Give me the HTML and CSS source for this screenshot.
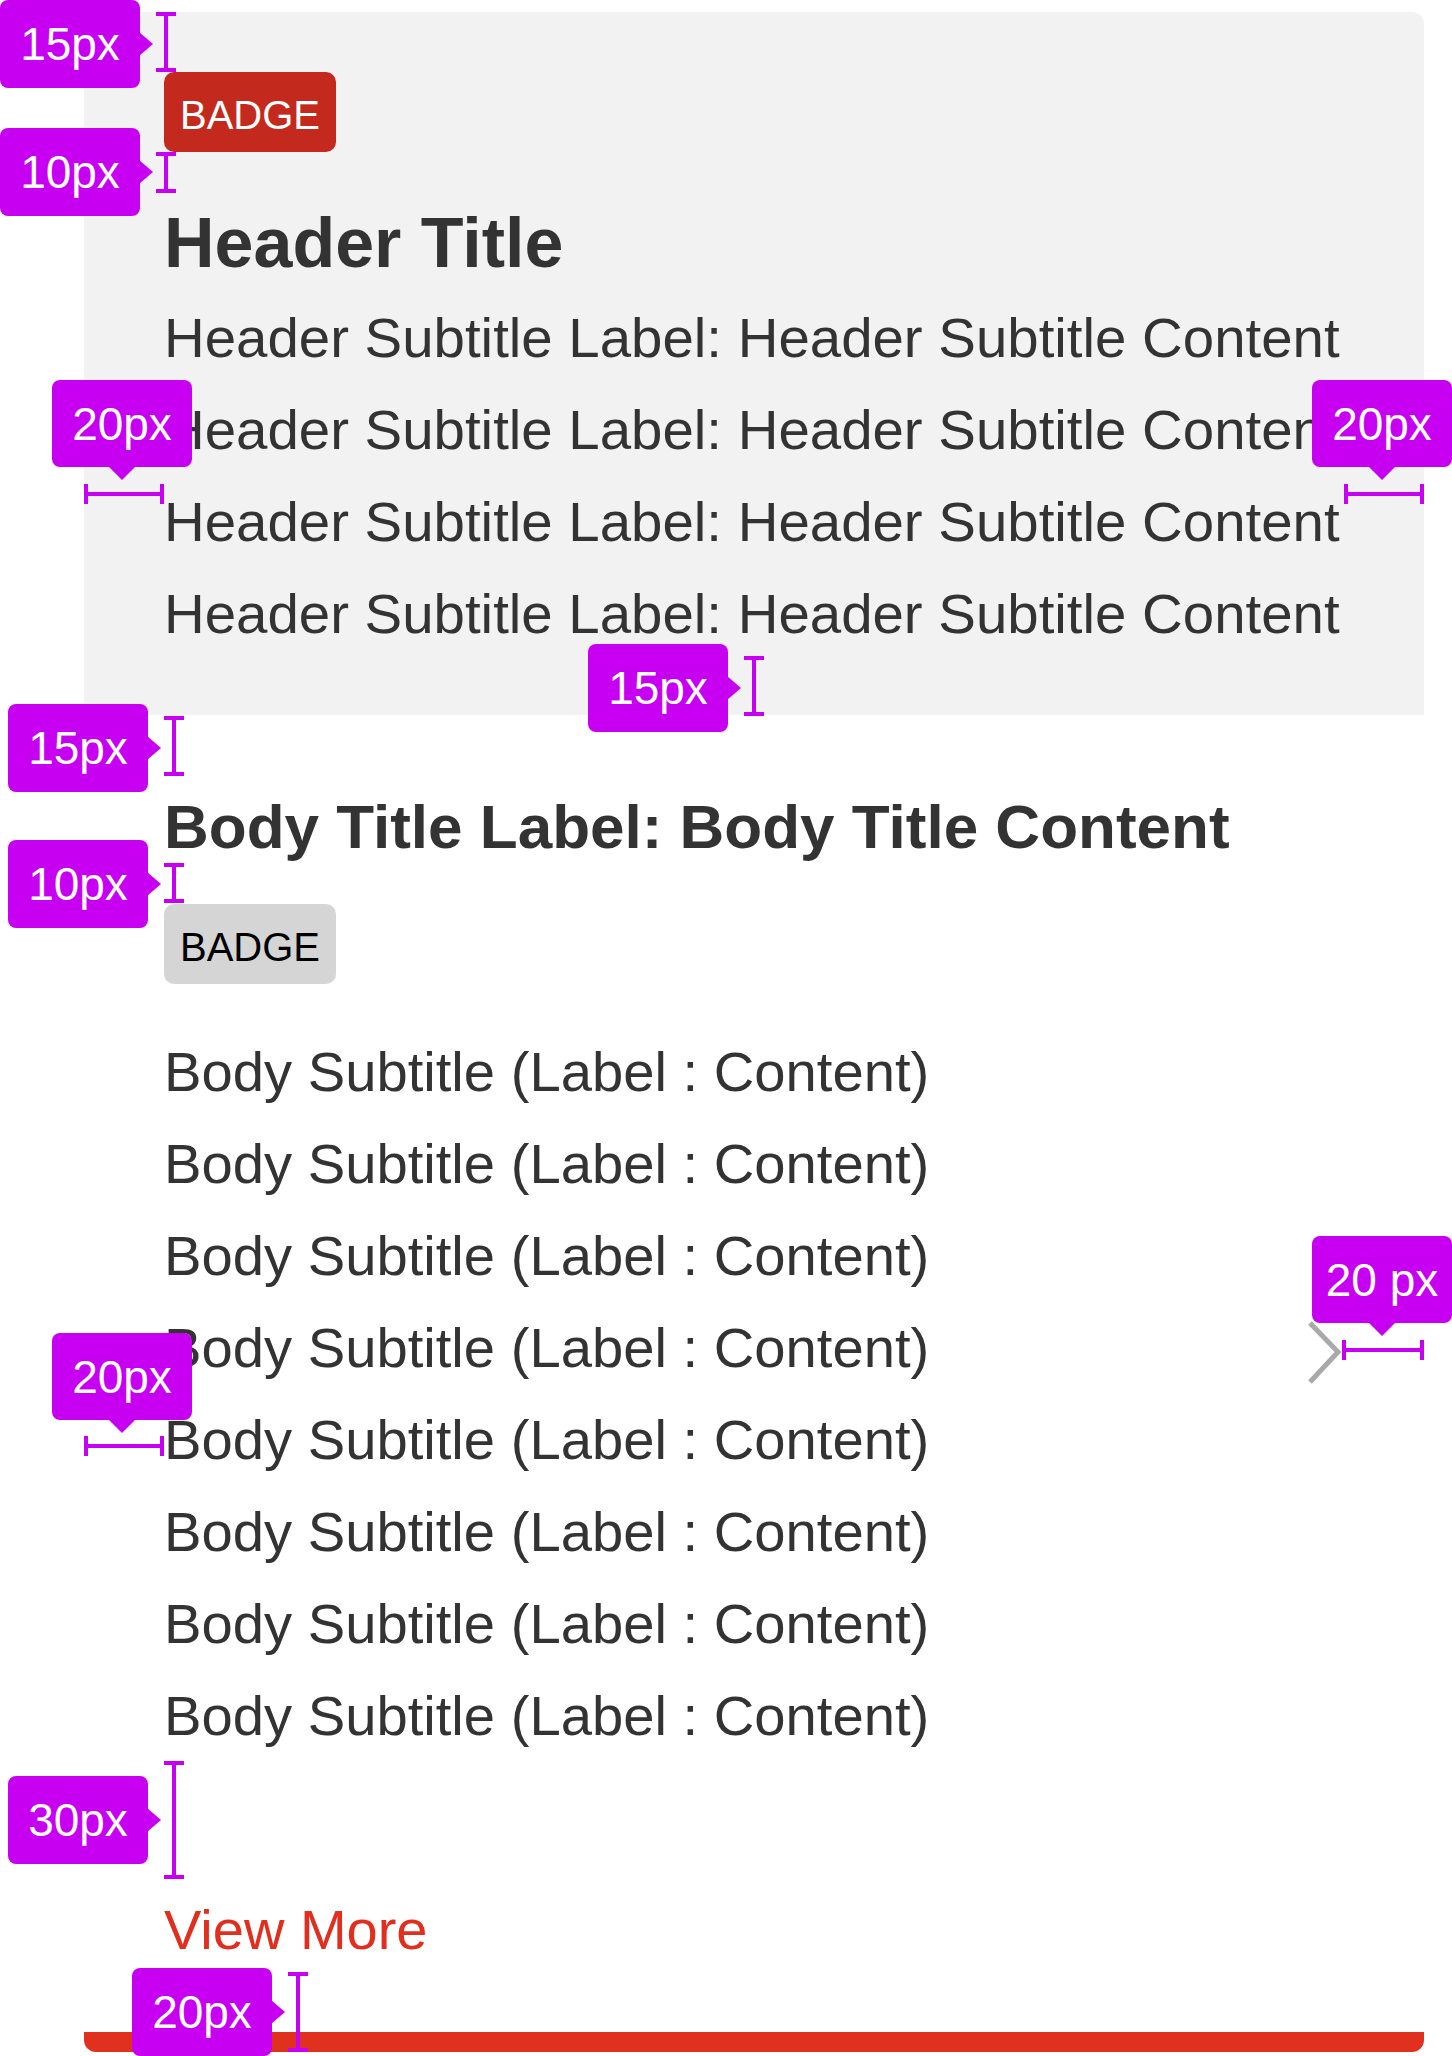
FILE: index.html
```html
<!DOCTYPE html>
<html lang="en">
<head>
<meta charset="utf-8">
<title>Card spec</title>
<link rel="stylesheet" href="styles.css">
</head>
<body>
<div class="page">
  <div class="card">
    <div class="header">
      <span class="badge badge-red">BADGE</span>
      <h1 class="header-title">Header Title</h1>
      <div class="header-sub">Header Subtitle Label: Header Subtitle Content</div>
      <div class="header-sub">Header Subtitle Label: Header Subtitle Content</div>
      <div class="header-sub">Header Subtitle Label: Header Subtitle Content</div>
      <div class="header-sub">Header Subtitle Label: Header Subtitle Content</div>
    </div>
    <div class="body">
      <div class="body-main">
        <h2 class="body-title">Body Title Label: Body Title Content</h2>
        <span class="badge badge-gray">BADGE</span>
        <ul class="body-list">
          <li>Body Subtitle (Label : Content)</li>
          <li>Body Subtitle (Label : Content)</li>
          <li>Body Subtitle (Label : Content)</li>
          <li>Body Subtitle (Label : Content)</li>
          <li>Body Subtitle (Label : Content)</li>
          <li>Body Subtitle (Label : Content)</li>
          <li>Body Subtitle (Label : Content)</li>
          <li>Body Subtitle (Label : Content)</li>
        </ul>
        <a class="view-more">View More</a>
      </div>
      <div class="chev">
        <svg width="36" height="66" viewBox="0 0 36 66"><polyline points="2,3 30,32 2,62" fill="none" stroke="#a9a9a9" stroke-width="5"/></svg>
      </div>
    </div>
    <div class="bar"></div>
  </div>

  <div class="tag tag-r t1">15px</div>
  <div class="vm m1"></div>
  <div class="tag tag-r t2">10px</div>
  <div class="vm m2"></div>
  <div class="tag tag-d t3">20px</div>
  <div class="hm m3"></div>
  <div class="tag tag-d t4">20px</div>
  <div class="hm m4"></div>
  <div class="tag tag-r t5">15px</div>
  <div class="vm m5"></div>
  <div class="tag tag-r t6">15px</div>
  <div class="vm m6"></div>
  <div class="tag tag-r t7">10px</div>
  <div class="vm m7"></div>
  <div class="tag tag-d t8">20 px</div>
  <div class="hm m8"></div>
  <div class="tag tag-d t9">20px</div>
  <div class="hm m9"></div>
  <div class="tag tag-r t10">30px</div>
  <div class="vm m10"></div>
  <div class="tag tag-r t11">20px</div>
  <div class="vm m11"></div>
</div>
</body>
</html>
```

FILE: styles.css
```css
html, body {
  margin: 0;
  padding: 0;
  background: #ffffff;
}
body {
  font-family: "Liberation Sans", Arial, Helvetica, sans-serif;
  color: #333333;
}
.page {
  position: relative;
  width: 1452px;
  height: 2056px;
  overflow: hidden;
}
.card {
  margin: 12px 28px 0 84px;
  display: flex;
  flex-direction: column;
}
.header {
  background: #f2f2f2;
  border-radius: 12px 12px 0 0;
  padding: 60px 80px 55px 80px;
  display: flex;
  flex-direction: column;
}
.badge {
  align-self: flex-start;
  height: 80px;
  padding: 0 16px;
  font-size: 40px;
  line-height: 86px;
  border-radius: 10px;
  box-sizing: border-box;
  overflow: hidden;
}
.badge-red {
  background: #c4291d;
  color: #ffffff;
}
.badge-gray {
  background: #d5d5d5;
  color: #000000;
  margin-top: 31px;
}
.header-title {
  margin: 42px 0 0;
  font-size: 70px;
  font-weight: bold;
  line-height: 98px;
  color: #333333;
}
.header-sub {
  font-size: 56.4px;
  line-height: 92px;
  white-space: nowrap;
}
.body {
  display: flex;
  padding: 0 80px 56px 80px;
}
.body-main {
  flex: 1;
  display: flex;
  flex-direction: column;
}
.body-title {
  margin: 66px 0 0;
  font-size: 62px;
  font-weight: bold;
  line-height: 92px;
  color: #333333;
}
.body-list {
  list-style: none;
  margin: 42px 0 0;
  padding: 0;
}
.body-list li {
  font-size: 56.2px;
  line-height: 92px;
  white-space: nowrap;
}
.view-more {
  margin-top: 122px;
  font-size: 56px;
  line-height: 92px;
  color: #e02f1f;
  align-self: flex-start;
}
.chev {
  align-self: flex-start;
  margin-top: 605px;
  width: 36px;
  height: 66px;
}
.chev svg {
  display: block;
}
.bar {
  height: 20px;
  background: #e0301e;
  border-radius: 0 0 12px 12px;
}

/* spec annotations */
.tag {
  position: absolute;
  width: 140px;
  height: 88px;
  background: #c800f2;
  color: #ffffff;
  border-radius: 8px;
  font-size: 46px;
  line-height: 88px;
  text-align: center;
  white-space: nowrap;
}
.tag-r::after {
  content: "";
  position: absolute;
  left: 139px;
  top: 32px;
  border-top: 12px solid transparent;
  border-bottom: 12px solid transparent;
  border-left: 14px solid #c800f2;
}
.tag-d::after {
  content: "";
  position: absolute;
  left: 57px;
  top: 87px;
  border-left: 13px solid transparent;
  border-right: 13px solid transparent;
  border-top: 13px solid #c800f2;
}
.vm {
  position: absolute;
  width: 20px;
  box-sizing: border-box;
  border-top: 4px solid #c800f2;
  border-bottom: 4px solid #c800f2;
}
.vm::before {
  content: "";
  position: absolute;
  left: 8px;
  top: 0;
  bottom: 0;
  width: 4px;
  background: #c800f2;
}
.hm {
  position: absolute;
  height: 20px;
  box-sizing: border-box;
  border-left: 4px solid #c800f2;
  border-right: 4px solid #c800f2;
}
.hm::before {
  content: "";
  position: absolute;
  top: 8px;
  left: 0;
  right: 0;
  height: 4px;
  background: #c800f2;
}

.t1 { left: 0; top: 0; }
.m1 { left: 156px; top: 12px; height: 60px; }
.t2 { left: 0; top: 128px; }
.m2 { left: 156px; top: 152px; height: 41px; }
.t3 { left: 52px; top: 380px; height: 87px; }
.m3 { left: 84px; top: 484px; width: 80px; }
.t4 { left: 1312px; top: 380px; height: 87px; }
.m4 { left: 1344px; top: 484px; width: 80px; }
.t5 { left: 588px; top: 644px; }
.m5 { left: 744px; top: 656px; height: 60px; }
.t6 { left: 8px; top: 704px; }
.m6 { left: 164px; top: 716px; height: 60px; }
.t7 { left: 8px; top: 840px; }
.m7 { left: 164px; top: 863px; height: 40px; }
.t8 { left: 1312px; top: 1236px; height: 87px; }
.m8 { left: 1342px; top: 1340px; width: 82px; }
.t9 { left: 52px; top: 1333px; height: 87px; }
.m9 { left: 84px; top: 1436px; width: 80px; }
.t10 { left: 8px; top: 1776px; }
.m10 { left: 164px; top: 1761px; height: 118px; }
.t11 { left: 132px; top: 1968px; }
.m11 { left: 288px; top: 1972px; height: 80px; }
```
